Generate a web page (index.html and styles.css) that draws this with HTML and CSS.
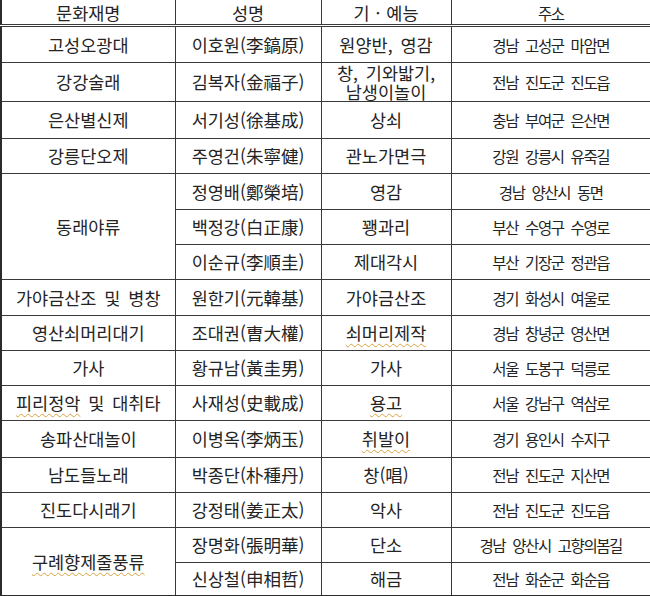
FILE: index.html
```html
<!DOCTYPE html>
<html lang="ko">
<head>
<meta charset="utf-8">
<link rel="stylesheet" href="styles.css">
</head>
<body>
<table class="heritage">
  <colgroup>
    <col class="c1"><col class="c2"><col class="c3"><col class="c4">
  </colgroup>
  <thead>
    <tr class="head">
      <th>문화재명</th><th>성명</th><th>기 · 예능</th><th class="addr">주소</th>
    </tr>
  </thead>
  <tbody>
    <tr class="r36"><td>고성오광대</td><td>이호원(李鎬原)</td><td>원양반, 영감</td><td class="addr">경남 고성군 마암면</td></tr>
    <tr class="r38"><td>강강술래</td><td>김복자(金福子)</td><td class="two">창, 기와밟기,<br>남생이놀이</td><td class="addr">전남 진도군 진도읍</td></tr>
    <tr class="r37"><td>은산별신제</td><td>서기성(徐基成)</td><td>상쇠</td><td class="addr">충남 부여군 은산면</td></tr>
    <tr class="r35"><td>강릉단오제</td><td>주영건(朱寧健)</td><td>관노가면극</td><td class="addr">강원 강릉시 유죽길</td></tr>
    <tr class="r36"><td rowspan="3">동래야류</td><td>정영배(鄭榮培)</td><td>영감</td><td class="addr">경남 양산시 동면</td></tr>
    <tr class="r35"><td>백정강(白正康)</td><td>꽹과리</td><td class="addr">부산 수영구 수영로</td></tr>
    <tr class="r35"><td>이순규(李順圭)</td><td>제대각시</td><td class="addr">부산 기장군 정관읍</td></tr>
    <tr class="r36"><td>가야금산조 및 병창</td><td>원한기(元韓基)</td><td>가야금산조</td><td class="addr">경기 화성시 여울로</td></tr>
    <tr class="r35"><td>영산쇠머리대기</td><td>조대권(曺大權)</td><td><span class="sp">쇠머리제작</span></td><td class="addr">경남 창녕군 영산면</td></tr>
    <tr class="r35"><td>가사</td><td>황규남(黃圭男)</td><td>가사</td><td class="addr">서울 도봉구 덕릉로</td></tr>
    <tr class="r35"><td><span class="sp">피리정악</span> 및 대취타</td><td>사재성(史載成)</td><td><span class="sp">용고</span></td><td class="addr">서울 강남구 역삼로</td></tr>
    <tr class="r37"><td>송파산대놀이</td><td>이병옥(李炳玉)</td><td><span class="sp">취발이</span></td><td class="addr">경기 용인시 수지구</td></tr>
    <tr class="r35"><td>남도들노래</td><td>박종단(朴種丹)</td><td>창(唱)</td><td class="addr">전남 진도군 지산면</td></tr>
    <tr class="r35"><td>진도다시래기</td><td>강정태(姜正太)</td><td>악사</td><td class="addr">전남 진도군 진도읍</td></tr>
    <tr class="r35"><td rowspan="2"><span class="sp">구례향제줄풍류</span></td><td>장명화(張明華)</td><td>단소</td><td class="addr">경남 양산시 고향의봄길</td></tr>
    <tr class="r33"><td>신상철(申相哲)</td><td>해금</td><td class="addr">전남 화순군 화순읍</td></tr>
  </tbody>
</table>
</body>
</html>
```

FILE: styles.css
```css
html, body {
  margin: 0;
  padding: 0;
  background: #ffffff;
}

.heritage {
  width: 650px;
  table-layout: fixed;
  border-collapse: collapse;
  font-family: "Noto Sans CJK KR", "Noto Sans", sans-serif;
  font-size: 17.5px;
  color: #242424;
  border-left: 2px solid #2b2b2b;
  border-right: 2px solid #2b2b2b;
  border-bottom: 2px solid #2b2b2b;
}

.c1 { width: 174px; }
.c2 { width: 146px; }
.c3 { width: 130px; }
.c4 { width: 200px; }

.heritage th,
.heritage td {
  border: 1px solid #3a3a3a;
  padding: 0;
  text-align: center;
  vertical-align: middle;
  font-weight: 400;
  line-height: 20px;
  white-space: nowrap;
  word-spacing: 3px;
}

.heritage th {
  height: 22px;
  line-height: 18px;
  padding-top: 2px;
  border-top: none;
  border-bottom: 3px double #3a3a3a;
  word-spacing: 1px;
}

.r33 td { height: 32px; }
.r35 td { height: 34px; }
.r36 td { height: 35px; }
.r37 td { height: 36px; }
.r38 td { height: 37px; }

.heritage .addr {
  font-size: 15.5px;
  letter-spacing: -1.4px;
  word-spacing: 4px;
}

.heritage td.two {
  line-height: 19px;
}

.sp {
  text-decoration: underline wavy #d9a23c;
  text-decoration-thickness: 1px;
  text-underline-offset: 3px;
}
```
